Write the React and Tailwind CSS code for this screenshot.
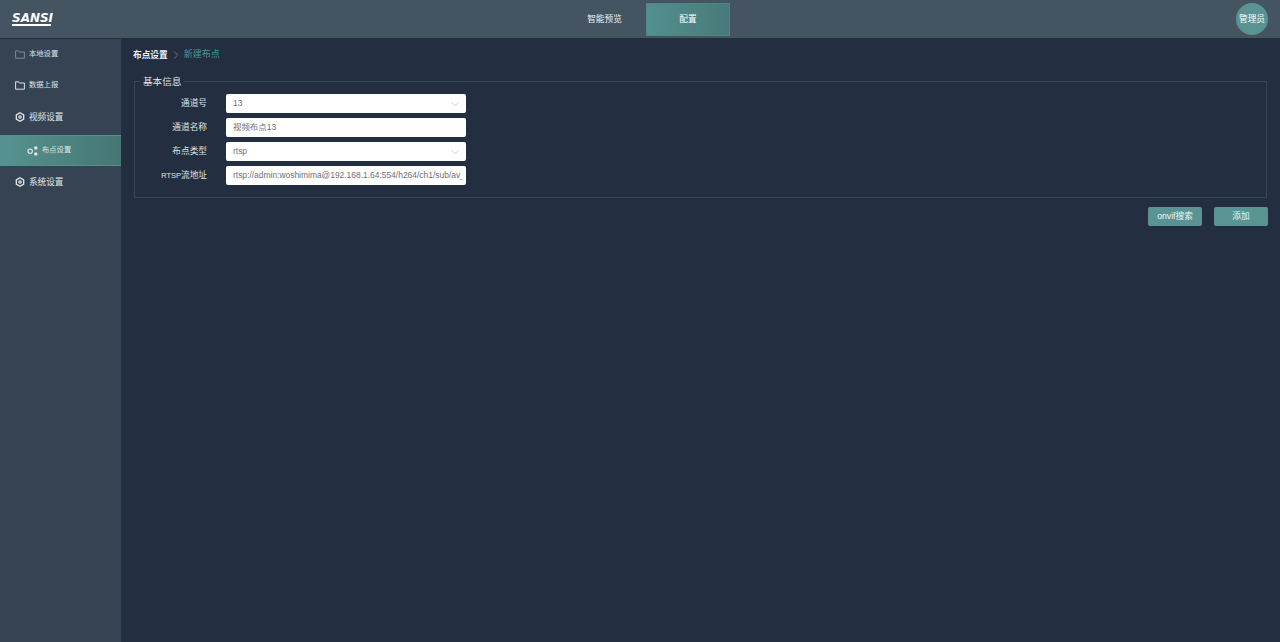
import { ChevronDown, ChevronRight } from 'lucide-react';

const font = { fontFamily: '"Liberation Sans", "Noto Sans CJK SC", sans-serif' };

const FolderIcon = ({ color }) => (
  <svg width="10" height="9" viewBox="0 0 10 9" fill="none" stroke={color} className="shrink-0">
    <path d="M.6.8h3l.8 1.2h5v6.2H.6z" strokeWidth="1" />
  </svg>
);

const GearIcon = () => (
  <svg width="10" height="10" viewBox="0 0 10 10" fill="none" stroke="#e4e8ea" className="shrink-0">
    <path d="M5 .8 8.7 2.9v4.2L5 9.2 1.3 7.1V2.9z" strokeWidth="1.3" />
    <circle cx="5" cy="5" r="1.2" strokeWidth="1.2" />
  </svg>
);

const NodesIcon = () => (
  <svg width="11" height="10" viewBox="0 0 11 10" fill="#dfe7e8" className="shrink-0">
    <circle cx="3.2" cy="5.2" r="2.2" fill="none" stroke="#dfe7e8" strokeWidth="1.2" />
    <circle cx="8.8" cy="2" r="1.7" />
    <circle cx="8.8" cy="8" r="1.7" />
  </svg>
);

const Field = ({ label, value, select }) => (
  <div className="flex items-center h-[19px]">
    <label className="w-[71px] text-right text-[8.67px] text-[#dfe4e8] whitespace-nowrap">{label}</label>
    <div className="ml-[19px] w-[240px] h-[19px] bg-white rounded-[2px] flex items-center pl-[7px] pr-[4px] overflow-hidden">
      <input readOnly value={value} className="flex-1 min-w-0 outline-none bg-transparent text-[8.45px] text-[#6e7075]" />
      {select && <ChevronDown size={14} strokeWidth={1} className="text-[#a8abb2] shrink-0" />}
    </div>
  </div>
);

const App = () => {
  return (
    <div className="h-[642px] w-[1280px] flex flex-col overflow-hidden bg-[#232e40]" style={font}>
      <header className="h-[38px] shrink-0 bg-[#445460] flex items-center relative">
        <div className="ml-3 flex flex-col items-start text-white">
          <span className="text-[12px] leading-[10px] font-bold italic" style={{ fontFamily: '"DejaVu Sans", sans-serif' }}>SANSI</span>
          <span className="h-[2px] w-[39px] bg-white mt-[1px]" />
        </div>
        <nav className="absolute left-[563px] top-[3px] flex h-[33px]">
          <div className="w-[83px] flex items-center justify-center text-[8.67px] text-[#eef1f2]">智能预览</div>
          <div className="w-[84px] flex items-center justify-center text-[8.67px] text-white bg-gradient-to-r from-[#54908e] to-[#477a79] border border-[#4f8582]">配置</div>
        </nav>
        <div className="ml-auto mr-[12px] w-8 h-8 rounded-full bg-[#5a9492] flex items-center justify-center text-[8.67px] text-white">管理员</div>
      </header>

      <div className="flex-1 flex min-h-0 pt-[1px]">
        <aside className="w-[121px] shrink-0 bg-[#354352]">
          <div className="h-[31px] flex items-center pl-[15px] gap-[4px]">
            <FolderIcon color="#7f8b96" />
            <span className="text-[7.3px] text-[#dfe3e6]">本地设置</span>
          </div>
          <div className="h-[31px] flex items-center pl-[15px] gap-[4px]">
            <FolderIcon color="#dfe3e6" />
            <span className="text-[7.3px] text-[#dfe3e6]">数据上报</span>
          </div>
          <div className="h-8 mb-[2px] flex items-center pl-[15px] gap-[4px]">
            <GearIcon />
            <span className="text-[8.6px] text-[#e4e8ea]">视频设置</span>
          </div>
          <div className="h-[31px] flex items-center pl-[27px] gap-[4px] bg-gradient-to-r from-[#569390] to-[#457674] border-y border-[#548f8c]">
            <NodesIcon />
            <span className="text-[7.3px] text-[#dfe7e8]">布点设置</span>
          </div>
          <div className="h-8 flex items-center pl-[15px] gap-[4px]">
            <GearIcon />
            <span className="text-[8.6px] text-[#e4e8ea]">系统设置</span>
          </div>
        </aside>

        <main className="flex-1 pl-3 pr-3 pt-[10px]">
          <div className="flex items-center h-3 text-[8.67px]">
            <span className="font-bold text-[#eef1f2]">布点设置</span>
            <ChevronRight size={14} strokeWidth={1} className="mx-[1px] text-[#8b97a1]" />
            <span className="text-[9px] text-[#4a9a9c]">新建布点</span>
          </div>

          <fieldset className="mt-[15px] ml-[1px] w-[1133px] h-[122px] border border-[#384557] pl-[1px] pt-[7px]">
            <legend className="ml-[4px] px-[3px] text-[9.6px] leading-[11px] text-[#dfe4e8]">基本信息</legend>
            <div className="flex flex-col gap-[5px]">
              <Field label="通道号" value="13" select />
              <Field label="通道名称" value="视频布点13" />
              <Field label="布点类型" value="rtsp" select />
              <Field label={<><span className="text-[7.5px]">RTSP</span>流地址</>} value="rtsp://admin:woshimima@192.168.1.64:554/h264/ch1/sub/av_stream" />
            </div>
          </fieldset>

          <div className="mt-[9px] flex justify-end gap-3 w-[1135px]">
            <button className="w-[54px] h-[19px] rounded-[2px] bg-[#5a9492] text-[8.67px] text-[#eef4f4]">onvif搜索</button>
            <button className="w-[54px] h-[19px] rounded-[2px] bg-[#5a9492] text-[8.67px] text-[#eef4f4]">添加</button>
          </div>
        </main>
      </div>
    </div>
  );
};

export default App;
